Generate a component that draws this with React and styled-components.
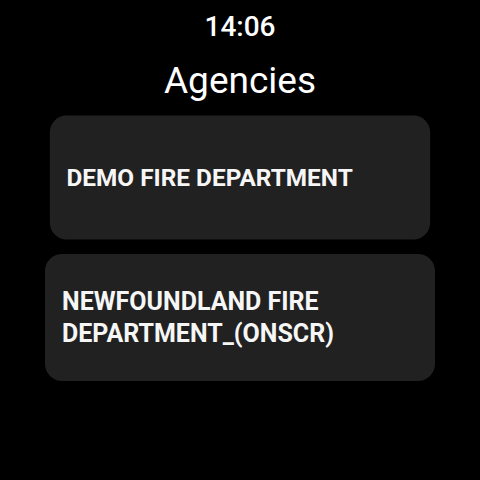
import styled, { createGlobalStyle } from "styled-components";

const GlobalStyle = createGlobalStyle`
  html, body {
    margin: 0;
    padding: 0;
    background: #000;
  }
  body {
    font-family: Roboto, "Noto Sans", sans-serif;
  }
`;

const Screen = styled.div`
  width: 480px;
  height: 480px;
  background: #000;
  color: #fff;
  display: flex;
  flex-direction: column;
  align-items: center;
  overflow: hidden;
`;

const Time = styled.div`
  margin-top: 10px;
  font-size: 28px;
  font-weight: 500;
  line-height: 34px;
`;

const Title = styled.h1`
  margin: 16px 0 0;
  font-size: 37px;
  font-weight: 400;
  line-height: 42px;
`;

const List = styled.div`
  margin-top: 12px;
  width: 390px;
  display: flex;
  flex-direction: column;
  gap: 13px;
`;

const Card = styled.div`
  height: 127px;
  box-sizing: border-box;
  background: #212121;
  border-radius: 17px;
  padding: 0 17px;
  display: flex;
  align-items: center;
  transform: scale(${(p) => p.scale || 1});
`;

const Name = styled.span`
  font-size: 25px;
  font-weight: 700;
  line-height: 32px;
  color: #f6f6f6;
`;

const agencies = [
  { name: "DEMO FIRE DEPARTMENT", scale: 0.975 },
  { name: "NEWFOUNDLAND FIRE DEPARTMENT_(ONSCR)", scale: 1 },
];

const App = () => {
  return (
    <Screen>
      <GlobalStyle />
      <Time>14:06</Time>
      <Title>Agencies</Title>
      <List>
        {agencies.map((a) => (
          <Card key={a.name} scale={a.scale}>
            <Name>{a.name}</Name>
          </Card>
        ))}
      </List>
    </Screen>
  );
};

export default App;
